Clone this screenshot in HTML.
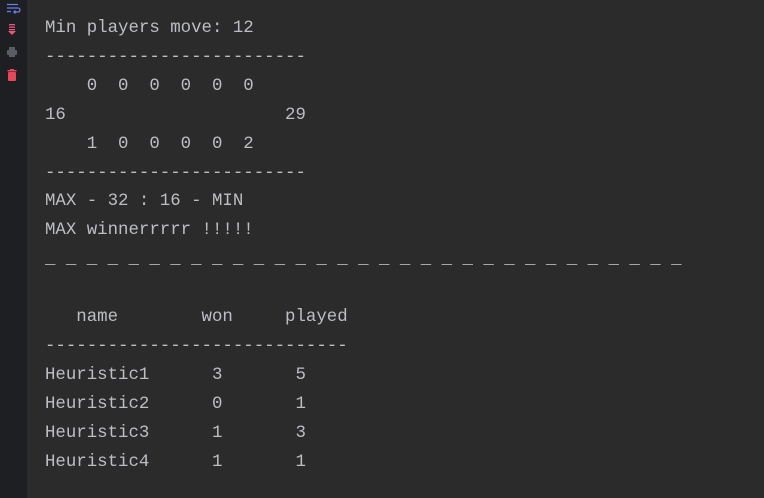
<!DOCTYPE html>
<html><head><style>
html,body{margin:0;padding:0;width:764px;height:498px;overflow:hidden;background:#2b2b2b;}
.g{position:absolute;left:0;top:0;width:27px;height:498px;background:#1e1f22;}
pre{position:absolute;left:45px;top:15px;margin:0;font-family:"Liberation Mono",monospace;font-size:17.4px;line-height:28.9px;color:#bcbec4;}
</style></head><body>
<div class="g">
<svg width="27" height="100" style="position:absolute;left:0;top:0">
<g stroke="#6b7ee8" stroke-width="1.3" fill="none">
<path d="M7 4.5h11M7 8h11a2 2 0 0 1 0 4h-4M15.5 10.5l-1.5 1.5 1.5 1.5M7 11.5h4"/>
</g>
<g fill="#e8567a">
<rect x="9" y="24" width="6" height="1.3"/><rect x="9" y="26.5" width="6" height="1.3"/><rect x="9" y="29" width="6" height="1.3"/>
<path d="M8 31h8l-4 4z"/>
</g>
<g fill="#5a5d63">
<rect x="9" y="47" width="6" height="3"/><rect x="7" y="50" width="10" height="5" rx="1"/><rect x="9" y="54" width="6" height="3"/>
</g>
<g fill="#e8465a">
<rect x="7.5" y="70" width="9" height="1.5"/><rect x="10" y="69" width="4" height="1.5"/><rect x="8" y="72" width="8" height="9" rx="1"/>
</g>
</svg>
</div>
<pre>Min players move: 12
-------------------------
    0  0  0  0  0  0
16                     29
    1  0  0  0  0  2
-------------------------
MAX - 32 : 16 - MIN
MAX winnerrrrr !!!!!
_ _ _ _ _ _ _ _ _ _ _ _ _ _ _ _ _ _ _ _ _ _ _ _ _ _ _ _ _ _ _

   name        won     played
-----------------------------
Heuristic1      3       5
Heuristic2      0       1
Heuristic3      1       3
Heuristic4      1       1</pre>
</body></html>
